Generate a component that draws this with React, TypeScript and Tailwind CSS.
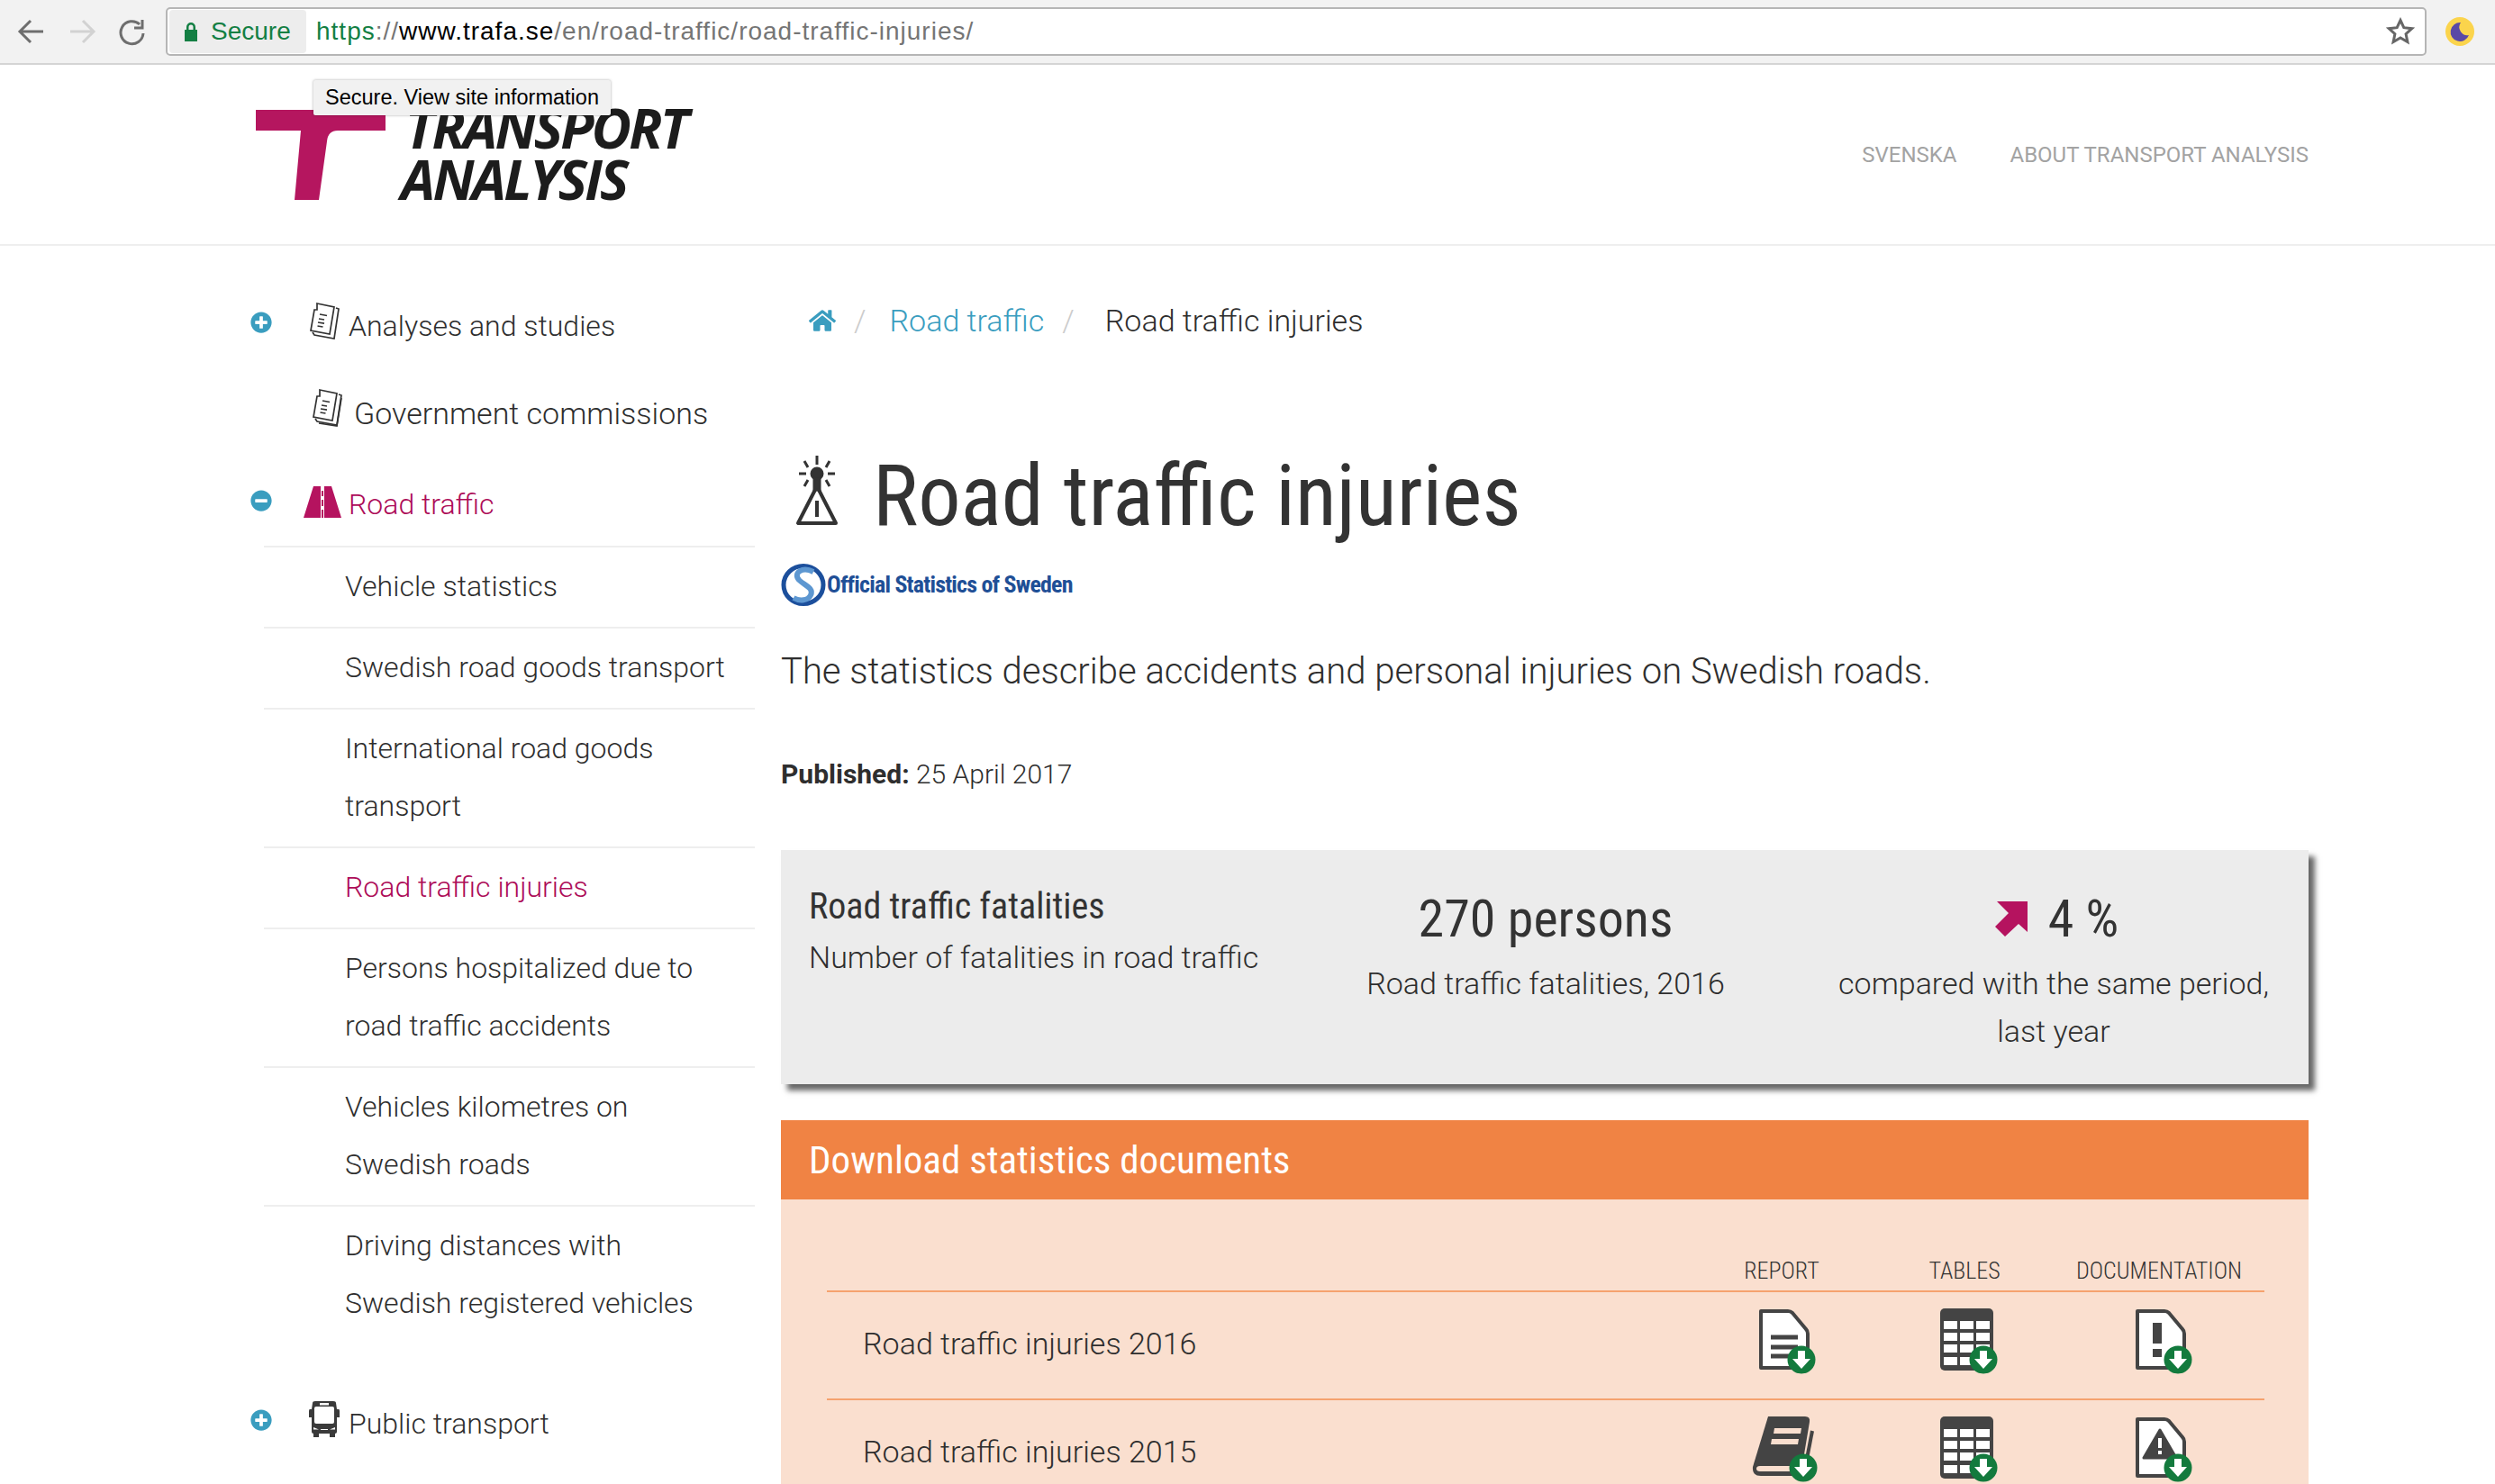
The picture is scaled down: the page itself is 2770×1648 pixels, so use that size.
import { FaHome, FaPlusCircle, FaMinusCircle } from "react-icons/fa";
import type { ReactNode } from "react";

const condensed = "font-['Roboto_Condensed',sans-serif]";

function BrowserBar() {
  return (
    <div className="relative flex h-[72px] items-center border-b-2 border-[#d4d4d4] bg-[#f2f2f2] pl-[18px] pr-[23px]">
      <div className="flex w-[166px] items-center gap-[22px] text-[#666]">
        <svg width="34" height="34" viewBox="0 0 34 34" fill="none" stroke="#6e6e6e" strokeWidth="3">
          <path d="M30 17H5M16 5 4 17l12 12" />
        </svg>
        <svg width="34" height="34" viewBox="0 0 34 34" fill="none" stroke="#d2d2d2" strokeWidth="3">
          <path d="M4 17h25M18 5l12 12-12 12" />
        </svg>
        <svg width="32" height="32" viewBox="0 0 32 32" fill="none" stroke="#6e6e6e" strokeWidth="3">
          <path d="M25 8A12.500 12.500 0 1 0 29 18" />
          <path d="M28 3v9h-9" />
        </svg>
      </div>
      <div className="flex h-[54px] flex-1 items-center rounded-[5px] border-2 border-[#b5b5b5] bg-white pl-[2px] pr-[11px] font-['Liberation_Sans',sans-serif] text-[28px]">
        <div className="flex h-[48px] w-[152px] items-center gap-[14px] rounded-[4px] bg-[#ededed] pl-[16px] text-[#137f43]">
          <svg width="16" height="22" viewBox="0 0 16 22" fill="#137f43">
            <path d="M3 9V6a5 5 0 0 1 10 0v3h2v13H1V9Zm2.500 0h5V6a2.500 2.500 0 0 0-5 0Z" />
          </svg>
          <span>Secure</span>
        </div>
        <div className="ml-[11px] flex-1 tracking-[1px] text-[#757575]">
          <span className="text-[#137f43]">https</span>://<span className="text-black">www.trafa.se</span>/en/road-traffic/road-traffic-injuries/
        </div>
        <svg width="32" height="32" viewBox="0 0 32 32" fill="none" stroke="#666" strokeWidth="3">
          <path d="M16 3.500l3.800 8.200 8.900 1-6.600 6 1.800 8.800L16 23l-7.900 4.500 1.800-8.800-6.600-6 8.900-1Z" />
        </svg>
      </div>
      <svg className="ml-[21px]" width="32" height="32" viewBox="0 0 32 32">
        <circle cx="16" cy="16" r="16" fill="#fbd44c" />
        <path d="M17 6a10.500 10.500 0 1 0 9 14 9 9 0 0 1-9-14Z" fill="#5a48a6" />
      </svg>
      <div className="absolute left-[348px] top-[89px] z-10 flex h-[39px] w-[330px] items-center justify-center rounded-[2px] bg-[#f1f1f1] font-['Liberation_Sans',sans-serif] text-[23.5px] text-black shadow-[0_0_3px_rgba(0,0,0,0.35)]">
        Secure. View site information
      </div>
    </div>
  );
}

function Logo() {
  return (
    <div className="flex h-[100px] items-start">
      <svg width="146" height="100" viewBox="0 0 146 100" fill="#b5165f">
        <path d="M0 0H144V23H91Q80 23 79 35L70 100H43L50 23H0Z" />
      </svg>
      <div className="ml-[15px] -mt-[9px] font-['Open_Sans',sans-serif] text-[61px] font-bold italic leading-[57px] tracking-[-2.800px] text-[#1c1c1c]">
        <div className="ml-[5px] whitespace-nowrap">TRANSPORT</div>
        <div className="whitespace-nowrap">ANALYSIS</div>
      </div>
    </div>
  );
}

function SiteHeader() {
  return (
    <header className="flex h-[201px] items-center justify-between border-b-2 border-[#eeeeee] pl-[284px] pr-[207px]">
      <Logo />
      <nav className="flex gap-[59px] text-[24px] text-[#a3a3a3]">
        <a>SVENSKA</a>
        <a>ABOUT TRANSPORT ANALYSIS</a>
      </nav>
    </header>
  );
}

function PaperIcon({ spiral }: { spiral?: boolean }) {
  return (
    <svg width="34" height="42" viewBox="0 0 34 42" fill="none" stroke="#333" strokeWidth="1.700">
      <path d="M30 6l3 1-5 33-22-4-2-3" />
      {spiral && <path d="M33 10l-5 31-20-3" />}
      <path d="M9 1 28 5l-5 30L2 31 6 8 9 8Z" fill="white" />
      <path d="M12 13l8 1.500M11 18l6 1M10 22l7 1.200M9.500 26l6 1" />
    </svg>
  );
}

function RoadIcon() {
  return (
    <svg width="42" height="36" viewBox="0 0 42 36" fill="#b5135f">
      <path d="M11 0h8v35H0ZM23 0h8l11 35H23ZM20 5h2v6h-2ZM20 15h2v7h-2ZM20 26h2v9h-2Z" />
    </svg>
  );
}

function BusIcon() {
  return (
    <svg width="34" height="40" viewBox="0 0 34 40" fill="#3a3a3a">
      <path d="M4 2Q4 0 7 0h20q3 0 3 2l1 7h2q1 0 1 2v7h-3v16q0 2-2 2v4h-6v-4H11v4H5v-4q-2 0-2-2V18H0v-7q0-2 1-2h2Z" />
      <rect x="6" y="6" width="22" height="19" rx="2" fill="white" />
      <rect x="12" y="2" width="10" height="2.500" fill="white" />
      <path d="M5 29l6 2.500H5ZM29 29l-6 2.500h6ZM13 31h8v1h-8Z" fill="white" />
    </svg>
  );
}

function TopRow({ expanded, icon, label, active }: { expanded?: boolean; icon: ReactNode; label: string; active?: boolean }) {
  return (
    <div className="relative flex h-[56px] items-center">
      <div className="absolute -left-[60px] -top-[4px] flex h-[56px] items-center text-[24px] text-[#3a9dbf]">
        {expanded ? <FaMinusCircle /> : <FaPlusCircle />}
      </div>
      <div className="mb-[10px] ml-[5px] mr-[10px] flex items-center">{icon}</div>
      <span className={active ? "text-[#ad0c58]" : "text-[#2e2e2e]"}>{label}</span>
    </div>
  );
}

const subItems = [
  ["Vehicle statistics"],
  ["Swedish road goods transport"],
  ["International road goods", "transport"],
  ["Road traffic injuries"],
  ["Persons hospitalized due to", "road traffic accidents"],
  ["Vehicles kilometres on", "Swedish roads"],
  ["Driving distances with", "Swedish registered vehicles"],
];

function Sidebar() {
  return (
    <aside className="w-[560px] shrink-0 pt-[61px] text-[32px] font-light">
      <div className="pl-[60px]">
        <TopRow icon={<PaperIcon />} label="Analyses and studies" />
      </div>
      <div className="mt-[41px] pl-[68px]">
        <div className="flex h-[56px] items-center">
          <div className="mr-[13px] -mt-[12px] flex items-center">
            <PaperIcon spiral />
          </div>
          <span className="text-[34px] text-[#2e2e2e]">Government commissions</span>
        </div>
      </div>
      <div className="mt-[45px] pl-[60px]">
        <TopRow
          expanded
          active
          icon={
            <div className="-ml-[6px] mr-[-2px] mt-[6px]">
              <RoadIcon />
            </div>
          }
          label="Road traffic"
        />
      </div>
      <div className="ml-[15px] mt-[18px] border-t-2 border-[#eeeeee]">
        {subItems.map((lines, i) => (
          <div key={i} className={`pb-[13px] pl-[90px] pt-[11px] leading-[64px] ${i < subItems.length - 1 ? "border-b-2 border-[#eeeeee]" : ""} ${i === 3 ? "text-[#ad0c58]" : "text-[#2e2e2e]"}`}>
            {lines.map((l) => (
              <div key={l}>{l}</div>
            ))}
          </div>
        ))}
      </div>
      <div className="mt-[61px] pl-[60px]">
        <TopRow icon={<BusIcon />} label="Public transport" />
      </div>
    </aside>
  );
}

function InjuryIcon() {
  return (
    <svg className="mb-[12px]" width="48" height="78" viewBox="0 0 48 78" fill="none" stroke="#333" strokeWidth="3">
      <circle cx="24" cy="20" r="6" fill="#333" />
      <path d="M24 0v10M10 6l4 7M38 6l-4 7M4 20h8M36 20h8M10 34l4-7M38 34l-4-7" />
      <path d="M24 34 3 75h42Z" strokeWidth="4" strokeLinejoin="round" />
      <path d="M21 26h6v12h-6Z" fill="#333" />
      <path d="M24 50v18" strokeWidth="4" />
    </svg>
  );
}

function SwedenLogo() {
  return (
    <div className="mt-[25px] flex h-[47px] items-center">
      <svg width="54" height="47" viewBox="0 0 54 47" fill="none">
        <ellipse cx="25" cy="23.500" rx="22" ry="21" stroke="#1c4f9c" strokeWidth="5" />
        <path d="M36 9C24 3 13 10 20 18c6 6 17 9 13 17-3 6-12 7-19 3" stroke="#5d97d1" strokeWidth="6" />
      </svg>
      <span className={`${condensed} -ml-[3px] text-[26px] font-bold tracking-[-0.800px] text-[#1f4f96]`}>Official Statistics of Sweden</span>
    </div>
  );
}

function StatsBox() {
  return (
    <section className="mt-[56px] grid h-[260px] grid-cols-[568px_562px_566px] bg-[#ececec] shadow-[7px_7px_6px_rgba(0,0,0,0.6)]">
      <div className="pl-[31px] pt-[36px]">
        <div className={`${condensed} text-[40px] leading-[54px] text-[#333]`}>Road traffic fatalities</div>
        <div className="mt-[3px] text-[34px] font-light leading-[52px] text-[#2e2e2e]">Number of fatalities in road traffic</div>
      </div>
      <div className="pt-[40px] text-center">
        <div className={`${condensed} text-[58px] leading-[72px] text-[#333]`}>270 persons</div>
        <div className="mt-[10px] text-[34px] font-light leading-[53px] text-[#2e2e2e]">Road traffic fatalities, 2016</div>
      </div>
      <div className="pt-[40px] text-center">
        <div className={`${condensed} flex items-center justify-center gap-[22px] pl-[4px] text-[58px] leading-[72px] text-[#333]`}>
          <svg width="40" height="40" viewBox="0 0 40 40" fill="#b5135f">
            <path d="M5 1h34v34l-10-9-15 14-11-11 15-15Z" />
          </svg>
          4 %
        </div>
        <div className="mt-[10px] text-[34px] font-light leading-[53px] text-[#2e2e2e]">
          compared with the same period,
          <br />
          last year
        </div>
      </div>
    </section>
  );
}

function Badge() {
  return (
    <g>
      <circle cx="48" cy="57" r="15.500" fill="#137a3d" />
      <path d="M44 47h8v9h6L48 67 38 56h6Z" fill="white" />
    </g>
  );
}

function DocShell({ children }: { children?: ReactNode }) {
  return (
    <svg width="66" height="74" viewBox="0 0 66 74">
      <path d="M3 3h30q3 0 5 2l15 18q2 2 2 5v38H3Z" fill="white" stroke="#444" strokeWidth="4" strokeLinejoin="round" />
      {children}
      <Badge />
    </svg>
  );
}

function ReportIcon() {
  return (
    <DocShell>
      <path d="M14 32h30M14 43h30M14 53h24" stroke="#444" strokeWidth="5" />
    </DocShell>
  );
}

function TableIcon() {
  const xs = [4, 22, 40];
  const ys = [14, 27, 40, 54];
  return (
    <svg width="66" height="74" viewBox="0 0 66 74">
      <rect x="0" y="0" width="59" height="69" rx="5" fill="#444" />
      {ys.map((y) => xs.map((x) => <rect key={`${x}-${y}`} x={x} y={y} width="15" height="9" fill="white" />))}
      <Badge />
    </svg>
  );
}

function NoticeIcon() {
  return (
    <DocShell>
      <path d="M20 16h10v23H20ZM20 45h10v9H20Z" fill="#444" />
    </DocShell>
  );
}

function WarningIcon() {
  return (
    <DocShell>
      <path d="M28 15 46 46H10Z" fill="#444" stroke="#444" strokeWidth="3" strokeLinejoin="round" />
      <path d="M26 24h4v11h-4ZM26 38h4v4h-4Z" fill="white" />
    </DocShell>
  );
}

function BookIcon() {
  return (
    <svg className="-ml-[4px]" width="76" height="74" viewBox="0 0 76 74">
      <path d="M18 0h41q6 0 5 6L54 66H10Q0 66 1 56Z" fill="#444" />
      <path d="M67 16 57 68" stroke="#444" strokeWidth="4" fill="none" />
      <path d="M5 58q0-3 4-3h38v6H9q-4 0-4-3Z" fill="#fadfcf" />
      <path d="M25 13h30l-1 6H24ZM22 25h30l-1 6H21Z" fill="#fadfcf" />
      <g transform="translate(9 0)">
        <Badge />
      </g>
    </svg>
  );
}

function DocRow({ label, report, doc }: { label: string; report: ReactNode; doc: ReactNode }) {
  return (
    <div className="grid h-[120px] grid-cols-[957px_204px_204px_228px] border-t-2 border-[#f5a26f] pt-[18px]">
      <div className="pl-[40px] pt-[13px] text-[34px] font-light leading-[52px] text-[#2e2e2e]">{label}</div>
      <div className="flex justify-center pl-[16px]">{report}</div>
      <div className="flex justify-center pl-[12px]">
        <TableIcon />
      </div>
      <div className="flex justify-center pl-[12px]">{doc}</div>
    </div>
  );
}

function Downloads() {
  return (
    <section className="mt-[40px]">
      <div className={`${condensed} flex h-[88px] items-center bg-[#f08344] pl-[31px] text-[43px] text-white`}>Download statistics documents</div>
      <div className="bg-[#fadfcf] pl-[51px] pr-[49px] pt-[64px]">
        <div className={`${condensed} grid h-[37px] grid-cols-[957px_204px_204px_228px] text-center text-[26px] font-light leading-[30px] text-[#333]`}>
          <div />
          <div className="pl-[2px]">REPORT</div>
          <div>TABLES</div>
          <div>DOCUMENTATION</div>
        </div>
        <DocRow label="Road traffic injuries 2016" report={<ReportIcon />} doc={<NoticeIcon />} />
        <DocRow label="Road traffic injuries 2015" report={<BookIcon />} doc={<WarningIcon />} />
      </div>
    </section>
  );
}

function Content() {
  return (
    <main className="w-[1696px] shrink-0 pt-[61px]">
      <div className="flex h-[44px] items-center pl-[31px] text-[34px] font-light text-[#2e2e2e]">
        <FaHome className="text-[30px] text-[#3a9dbf]" />
        <span className="ml-[20px] text-[#ccc]">/</span>
        <a className="ml-[26px] text-[#3a9dbf]">Road traffic</a>
        <span className="ml-[20px] text-[#ccc]">/</span>
        <span className="ml-[34px]">Road traffic injuries</span>
      </div>
      <div className="mt-[123px] flex h-[100px] items-center pl-[16px]">
        <InjuryIcon />
        <h1 className={`${condensed} ml-[38px] text-[94.500px] leading-[100px] text-[#333]`}>Road traffic injuries</h1>
      </div>
      <SwedenLogo />
      <p className="mt-[45px] text-[40px] font-light leading-[56px] text-[#2e2e2e]">The statistics describe accidents and personal injuries on Swedish roads.</p>
      <p className="mt-[58px] text-[30px] font-light leading-[56px] text-[#2e2e2e]">
        <b className="font-bold">Published:</b> 25 April 2017
      </p>
      <StatsBox />
      <Downloads />
    </main>
  );
}

export default function App() {
  return (
    <div className="h-[1648px] overflow-hidden bg-white font-['Roboto',sans-serif]">
      <BrowserBar />
      <SiteHeader />
      <div className="flex pl-[278px]">
        <Sidebar />
        <div className="w-[29px] shrink-0" />
        <Content />
      </div>
    </div>
  );
}
